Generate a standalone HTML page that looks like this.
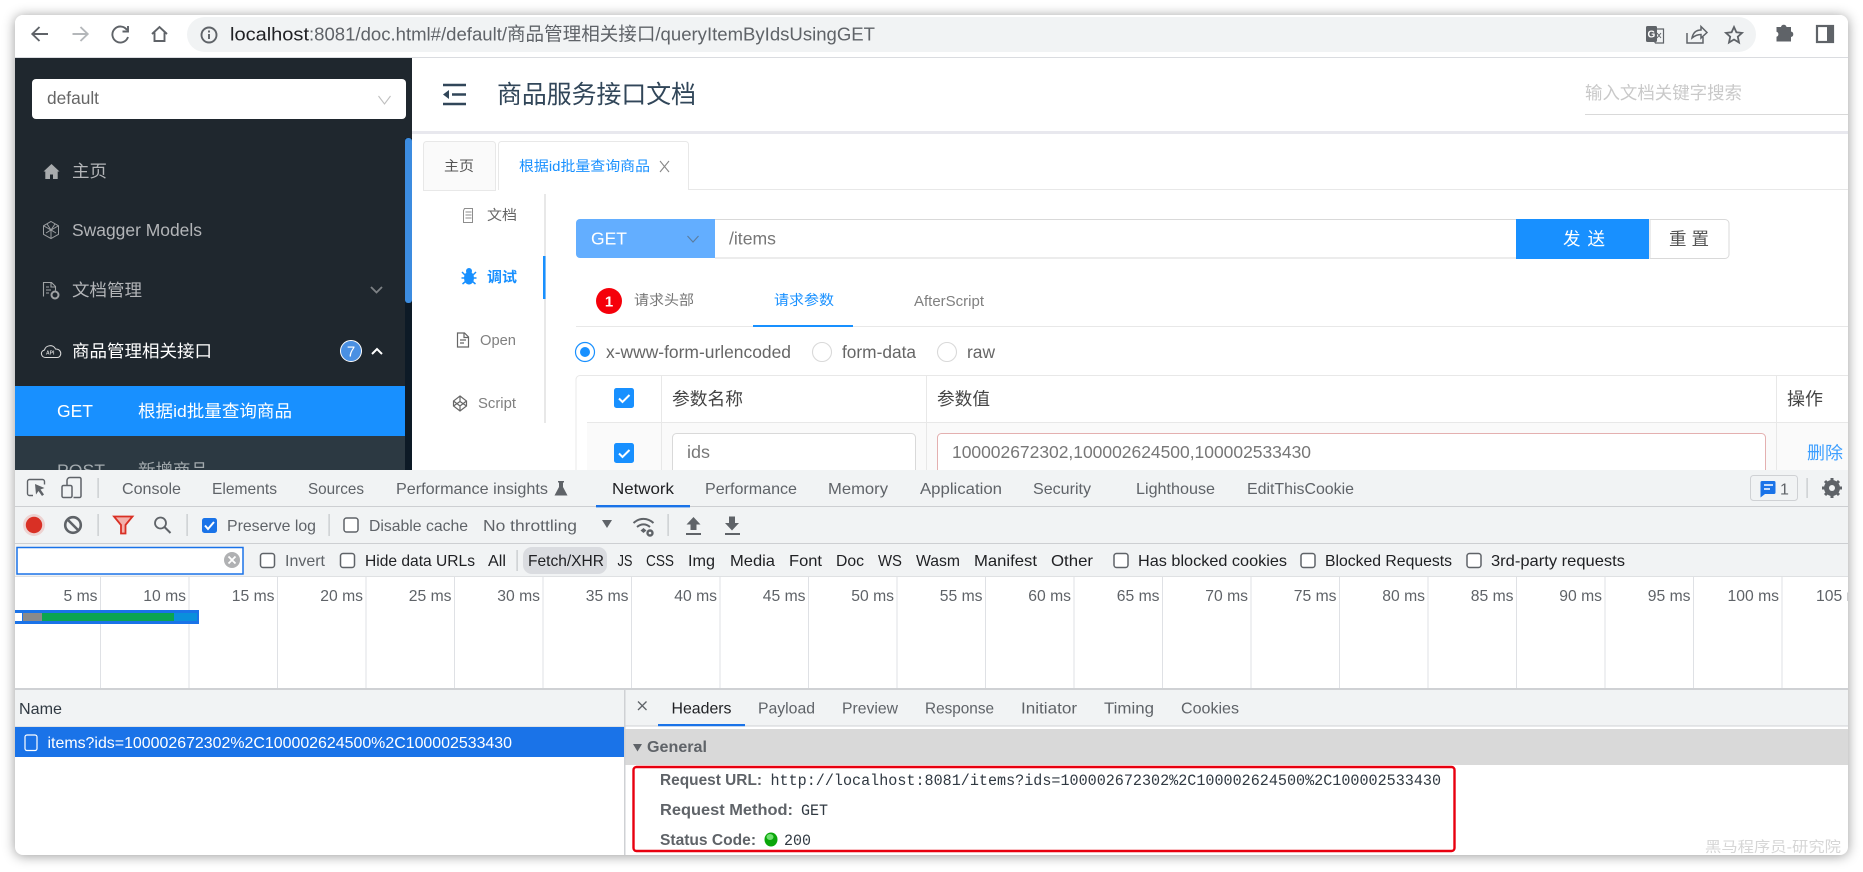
<!DOCTYPE html>
<html lang="zh"><head><meta charset="utf-8"><title>商品服务接口文档</title>
<style>
html,body{margin:0;padding:0;background:#fff;width:1863px;height:872px;overflow:hidden}
svg{display:block}
text{font-family:"Liberation Sans","Noto Sans CJK SC",sans-serif;white-space:pre}
.m{font-family:"Liberation Mono","Noto Sans CJK SC",monospace}
.d{font-size:16px;fill:#5f6368}
.k{font-size:16px;fill:#202124}
.b{font-size:16px;font-weight:700;fill:#5f6368}
.s{font-size:17.2px;fill:#b3b5b8}
.t{font-size:15.7px;fill:#5f6368}
.cb{fill:#fff;stroke:#5f6368;stroke-width:1.5}
.lg{stroke:#dfe1e5;stroke-width:1}
</style></head><body>
<svg xmlns="http://www.w3.org/2000/svg" width="1863" height="872" viewBox="0 0 1863 872">
<defs><clipPath id="w"><rect x="15" y="15" width="1833" height="840" rx="8"/></clipPath></defs>
<rect x="15" y="15" width="1833" height="840" rx="8" fill="#fff" style="filter:drop-shadow(0 1px 6px rgba(0,0,0,.4))"/>
<g clip-path="url(#w)">
<!-- browser toolbar -->
<rect x="15" y="15" width="1833" height="43" fill="#fff"/>
<rect x="15" y="57" width="1833" height="1" fill="#dadce0"/>
<rect x="187" y="17" width="1569" height="35" rx="17.5" fill="#f1f3f4"/>
<g fill="none" stroke="#5f6368" stroke-width="1.9">
<path d="M48 34H32.5M39.5 27l-7.2 7 7.2 7"/>
<path d="M88 34H72.5M80.5 27l7.2 7-7.2 7" stroke="#b4b7ba"/>
<path d="M127 30a8 8 0 1 0 1 7"/><path d="M128 26v5.5h-5.5" />
<path d="M152 34l7.5-7 7.500 7M154.500 32.500v8.500h10v-8.500"/>
<circle cx="209" cy="35" r="7.500"/><path d="M209 34v5M209 30.500v2"/>
</g>
<text x="230" y="40.500" font-size="18.500" fill="#202124" textLength="79" lengthAdjust="spacingAndGlyphs">localhost</text>
<text x="309" y="40.500" font-size="18.500" fill="#5f6368" textLength="566" lengthAdjust="spacingAndGlyphs">:8081/doc.html#/default/商品管理相关接口/queryItemByIdsUsingGET</text>
<!-- right icons -->
<rect x="1646" y="26" width="11" height="16" rx="1.500" fill="#5f6368"/>
<text x="1647.500" y="37.500" font-size="10" font-weight="700" fill="#fff">G</text>
<path d="M1657 29h6.500v14h-8l-1-1.500" fill="none" stroke="#5f6368" stroke-width="1.200"/>
<path d="M1657 33l4 5M1661 33l-4 5" stroke="#5f6368" stroke-width="1"/>
<g fill="none" stroke="#5f6368" stroke-width="1.500">
<path d="M1687 33v10h16v-6"/><path d="M1692 38c1-5 4-8 9-8v-3.500l6 6-6 5.500v-3.500c-3 0-6 1-9 3.500z"/>
<path d="M1734 27l2.400 5.300 5.600.6-4.200 3.800 1.200 5.800-5-3-5 3 1.200-5.800-4.200-3.800 5.600-.6z" stroke-width="1.800"/>
</g>
<path d="M1777 31h4.500a2.800 2.800 0 0 1 5.500 0h4.500v4.500a2.800 2.800 0 0 1 0 5.500v4.500h-14.500v-4.800a2.600 2.600 0 0 0 0-5z" transform="translate(-.5 -4)" fill="#5f6368"/>
<rect x="1817" y="26" width="16" height="16" fill="none" stroke="#5f6368" stroke-width="2.200"/><rect x="1827" y="26" width="6" height="16" fill="#5f6368"/>

<!-- main -->
<rect x="412" y="58" width="1436" height="412" fill="#fff"/>
<!-- header -->
<g fill="none" stroke="#314659" stroke-width="2.400"><path d="M443 85h23M452 94.500h14M443 104h23"/></g>
<path d="M449 90v9l-6-4.500z" fill="#314659"/>
<text x="497" y="103" font-size="25" fill="#314659" textLength="199" lengthAdjust="spacingAndGlyphs">商品服务接口文档</text>
<text x="1585" y="99" font-size="17.500" fill="#c9c9c9" textLength="157" lengthAdjust="spacingAndGlyphs">输入文档关键字搜索</text>
<rect x="1585" y="114" width="263" height="1" fill="#d9d9d9"/>
<rect x="412" y="131" width="1436" height="3" fill="#e8e8ee"/>
<!-- tabs -->
<rect x="689" y="189" width="1159" height="1" fill="#e8e8e8"/>
<path d="M423.500 190.500v-46a3 3 0 0 1 3-3h66a3 3 0 0 1 3 3v46z" fill="#fafafa" stroke="#e8e8e8"/>
<text x="444" y="171" font-size="14.250" fill="#555" textLength="30" lengthAdjust="spacingAndGlyphs">主页</text>
<path d="M498.500 190v-45.500a3 3 0 0 1 3-3h184a3 3 0 0 1 3 3v45.500" fill="#fff" stroke="#e8e8e8"/>
<text x="519" y="171" font-size="14.250" fill="#1890ff" textLength="131" lengthAdjust="spacingAndGlyphs">根据id批量查询商品</text>
<path d="M660 161l9 11M669 161l-9 11" stroke="#888" stroke-width="1.100"/>
<!-- left vtabs -->
<rect x="544" y="194" width="2" height="229" fill="#e8e8e8"/>
<rect x="543" y="256" width="2.500" height="43" fill="#1890ff"/>
<g fill="none" stroke="#8d8d8d" stroke-width="1"><path d="M464.500 208.500h8v14h-9v-12zM465.500 212h6M465.500 215h6M465.500 218h6"/></g>
<text x="487" y="220" font-size="14.250" fill="#666" textLength="30" lengthAdjust="spacingAndGlyphs">文档</text>
<g fill="#1890ff"><ellipse cx="469" cy="278" rx="5" ry="6.500"/><circle cx="469" cy="271" r="3"/><path d="M462 272l3 3M476 272l-3 3M461.500 278h4M472.500 278h4M462.500 284l3-2.500M475.500 284l-3-2.500" stroke="#1890ff" stroke-width="1.500"/></g>
<text x="487" y="282" font-size="14.250" font-weight="700" fill="#1890ff" textLength="30" lengthAdjust="spacingAndGlyphs">调试</text>
<path d="M457.500 333h7l4 4v10h-11zM464 333v4.500h4.500M460 340h6M460 343h4" fill="none" stroke="#666" stroke-width="1.200"/>
<text x="480" y="345" font-size="14.800" fill="#808080" textLength="36" lengthAdjust="spacingAndGlyphs">Open</text>
<path d="M460 396l6.500 5v5l-6.500 5-6.500-5v-5zM460 396v5.500M453.500 401l6.500 5 6.500-5M453.500 406l6.500-4.500 6.500 4.500M460 406v5" fill="none" stroke="#666" stroke-width="1.200"/>
<text x="478" y="408" font-size="14.800" fill="#808080" textLength="38" lengthAdjust="spacingAndGlyphs">Script</text>
<!-- url bar -->
<path d="M715 219.500h801M715 258h801" stroke="#d9d9d9"/>
<path d="M580 219h135v39h-135a4 4 0 0 1-4-4v-31a4 4 0 0 1 4-4z" fill="#63aeff"/>
<text x="591" y="244.500" font-size="17.500" fill="#fff" textLength="36" lengthAdjust="spacingAndGlyphs">GET</text>
<path d="M687.500 236l5.500 6 5.500-6" fill="none" stroke="#5b7c9e" stroke-width="1.100"/>
<text x="729" y="244.500" font-size="17.500" fill="#777" textLength="47" lengthAdjust="spacingAndGlyphs">/items</text>
<rect x="1516" y="219" width="133" height="40" fill="#1890ff"/>
<text x="1563" y="245" font-size="17.500" fill="#fff" textLength="42" lengthAdjust="spacing">发送</text>
<path d="M1650 219.500h75a4 4 0 0 1 4 4v31a4 4 0 0 1-4 4h-75z" fill="#fff" stroke="#d9d9d9"/>
<text x="1669" y="245" font-size="17.500" fill="#555" textLength="40" lengthAdjust="spacing">重置</text>
<!-- sub tabs -->
<rect x="576" y="326" width="1272" height="1" fill="#e8e8e8"/>
<circle cx="609" cy="301" r="13" fill="#f5000a"/>
<text x="609" y="306.500" font-size="15" font-weight="700" fill="#fff" text-anchor="middle">1</text>
<text x="634" y="305" font-size="14.250" fill="#777" textLength="60" lengthAdjust="spacingAndGlyphs">请求头部</text>
<text x="774" y="305" font-size="14.250" fill="#1890ff" textLength="60" lengthAdjust="spacingAndGlyphs">请求参数</text>
<rect x="753" y="325" width="100" height="2" fill="#1890ff"/>
<text x="914" y="306" font-size="14.800" fill="#808080" textLength="70" lengthAdjust="spacingAndGlyphs">AfterScript</text>
<!-- radios -->
<circle cx="585" cy="352" r="9.500" fill="#fff" stroke="#1890ff" stroke-width="1.200"/><circle cx="585" cy="352" r="5" fill="#1890ff"/>
<text x="606" y="358" font-size="17.500" fill="#666" textLength="185" lengthAdjust="spacingAndGlyphs">x-www-form-urlencoded</text>
<circle cx="822" cy="352" r="9.500" fill="#fff" stroke="#d9d9d9" stroke-width="1.100"/>
<text x="842" y="358" font-size="17.500" fill="#666" textLength="74" lengthAdjust="spacingAndGlyphs">form-data</text>
<circle cx="947" cy="352" r="9.500" fill="#fff" stroke="#d9d9d9" stroke-width="1.100"/>
<text x="967" y="358" font-size="17.500" fill="#666" textLength="28" lengthAdjust="spacingAndGlyphs">raw</text>
<!-- table -->
<path d="M1848 375.500H580a4 4 0 0 0-4 4V470" fill="none" stroke="#e8e8e8"/>
<rect x="587" y="422" width="1261" height="48" fill="#fafafa"/>
<rect x="587" y="422" width="1261" height="1" fill="#e8e8e8"/>
<path d="M661.500 376V470M926.500 376V470M1776.500 376V470" stroke="#e8e8e8"/>
<rect x="614" y="388" width="20" height="20" rx="2.500" fill="#1890ff"/><path d="M619 398.500l3.500 3.500 7-7" fill="none" stroke="#fff" stroke-width="2"/>
<rect x="614" y="443" width="20" height="20" rx="2.500" fill="#1890ff"/><path d="M619 453.500l3.500 3.500 7-7" fill="none" stroke="#fff" stroke-width="2"/>
<text x="672" y="405" font-size="17.500" fill="#444" textLength="71" lengthAdjust="spacingAndGlyphs">参数名称</text>
<text x="937" y="405" font-size="17.500" fill="#444" textLength="53" lengthAdjust="spacingAndGlyphs">参数值</text>
<text x="1787" y="405" font-size="17.500" fill="#444" textLength="36" lengthAdjust="spacingAndGlyphs">操作</text>
<rect x="672.500" y="433.500" width="243" height="60" rx="4" fill="#fff" stroke="#d9d9d9"/>
<rect x="937.500" y="433.500" width="828" height="60" rx="4" fill="#fff" stroke="#e4b0b0"/>
<text x="687" y="458" font-size="17.400" fill="#777" textLength="23" lengthAdjust="spacingAndGlyphs">ids</text>
<text x="952" y="458" font-size="17.400" fill="#777" textLength="359" lengthAdjust="spacingAndGlyphs">100002672302,100002624500,100002533430</text>
<text x="1807" y="459" font-size="17.500" fill="#3c9eff" textLength="36" lengthAdjust="spacingAndGlyphs">删除</text>

<!-- sidebar -->
<rect x="15" y="58" width="397" height="412" fill="#1f272e"/>
<rect x="405" y="58" width="7" height="412" fill="#0d1a26"/>
<rect x="15" y="58" width="397" height="80" fill="#1f272e"/>
<rect x="405" y="138" width="7" height="165" rx="3" fill="#3c8ce0"/>
<rect x="32" y="79" width="374" height="40" rx="4" fill="#fff"/>
<text x="47" y="104" font-size="17.500" fill="#666" textLength="52" lengthAdjust="spacingAndGlyphs">default</text>
<path d="M378.500 96l6 8 6-8" fill="none" stroke="#bfbfbf" stroke-width="1.100"/>
<path d="M43.500 171.500l8-7.500 8 7.500h-1.800v7.500h-4.700v-4.500h-3v4.500h-4.700v-7.500z" fill="#a8abad"/>
<text x="72" y="177" class="s" textLength="35" lengthAdjust="spacingAndGlyphs">主页</text>
<path d="M51 221.500l7.500 4.300v8.500l-7.500 4.300-7.500-4.300v-8.500zM44 226l7 4 7-4M51 230v8M47 224l4 6 4-6M46 233l5-3 5 3" fill="none" stroke="#9a9da0" stroke-width="1"/>
<text x="72" y="236" class="s" textLength="130" lengthAdjust="spacingAndGlyphs">Swagger Models</text>
<path d="M43.500 296.500v-14h8l4 4v4M51 283v4h4.500M46 287h3M46 290h5M46 293h3" fill="none" stroke="#a0a3a5" stroke-width="1.100"/>
<circle cx="55" cy="295" r="3.500" fill="none" stroke="#a0a3a5" stroke-width="2"/>
<text x="72" y="296" class="s" textLength="70" lengthAdjust="spacingAndGlyphs">文档管理</text>
<path d="M371 287l5.500 5.500 5.500-5.500" fill="none" stroke="#7d8185" stroke-width="1.800"/>
<path d="M47 357.500c-5 0-6.500-6-1.500-7.500 1-5 9-6 11-1 4 0 6 3 5 6-.5 1.500-2 2.500-3.500 2.500z" transform="translate(-1 0)" fill="none" stroke="#d9d9d9" stroke-width="1.100"/>
<text x="46" y="354.500" font-size="5" font-weight="700" fill="#d9d9d9">API</text>
<text x="72" y="357" font-size="17" fill="#fff" textLength="140" lengthAdjust="spacingAndGlyphs">商品管理相关接口</text>
<circle cx="351" cy="351" r="10.500" fill="#4a90e2" stroke="#fff" stroke-width="1"/>
<text x="351" y="356.500" font-size="15" fill="#fff" text-anchor="middle">7</text>
<path d="M372 354l5-5 5 5" fill="none" stroke="#fff" stroke-width="2"/>
<rect x="15" y="386" width="390" height="50" fill="#1890ff"/>
<text x="57" y="417" font-size="17.500" fill="#fff" textLength="36" lengthAdjust="spacingAndGlyphs">GET</text>
<text x="138" y="417" font-size="17" fill="#fff" textLength="154" lengthAdjust="spacingAndGlyphs">根据id批量查询商品</text>
<rect x="15" y="436" width="390" height="34" fill="#2c3942"/>
<text x="57" y="476" font-size="17" fill="#a3aaae" textLength="48" lengthAdjust="spacingAndGlyphs">POST</text>
<text x="138" y="476" font-size="17" fill="#a3aaae" textLength="70" lengthAdjust="spacingAndGlyphs">新增商品</text>

<!-- devtools -->
<rect x="15" y="470" width="1833" height="107" fill="#f1f3f4"/>
<rect x="15" y="506" width="1833" height="1" fill="#cdcfd2"/>
<rect x="15" y="543" width="1833" height="1" fill="#cdcfd2"/>
<rect x="15" y="576.500" width="1833" height="1" fill="#cdcfd2"/>
<path d="M33 495.500h-3.500a2 2 0 0 1-2-2v-12a2 2 0 0 1 2-2h13a2 2 0 0 1 2 2v3" fill="none" stroke="#5f6368" stroke-width="1.400"/>
<path d="M35 484l9.500 4-4 1.500 3.500 5-2 1.500-3.500-5-2.500 3.500z" fill="#5f6368"/>
<path d="M67 485v-4.500a3 3 0 0 1 3-3h9.500a1.500 1.500 0 0 1 1.500 1.500v17a1.500 1.500 0 0 1-1.500 1.500h-6" fill="none" stroke="#5f6368" stroke-width="1.500"/>
<rect x="62" y="485.500" width="10" height="12" rx="1.500" fill="none" stroke="#5f6368" stroke-width="1.500"/>
<rect x="97.500" y="478" width="1.200" height="20" fill="#c4c7ca"/>
<g class="d">
<text class="d" x="122" y="494" textLength="59" lengthAdjust="spacingAndGlyphs">Console</text>
<text class="d" x="212" y="494" textLength="65" lengthAdjust="spacingAndGlyphs">Elements</text>
<text class="d" x="308" y="494" textLength="56" lengthAdjust="spacingAndGlyphs">Sources</text>
<text class="d" x="396" y="494" textLength="152" lengthAdjust="spacingAndGlyphs">Performance insights</text>
<text class="k" x="612" y="494" textLength="62" lengthAdjust="spacingAndGlyphs">Network</text>
<text class="d" x="705" y="494" textLength="92" lengthAdjust="spacingAndGlyphs">Performance</text>
<text class="d" x="828" y="494" textLength="60" lengthAdjust="spacingAndGlyphs">Memory</text>
<text class="d" x="920" y="494" textLength="82" lengthAdjust="spacingAndGlyphs">Application</text>
<text class="d" x="1033" y="494" textLength="58" lengthAdjust="spacingAndGlyphs">Security</text>
<text class="d" x="1136" y="494" textLength="79" lengthAdjust="spacingAndGlyphs">Lighthouse</text>
<text class="d" x="1247" y="494" textLength="107" lengthAdjust="spacingAndGlyphs">EditThisCookie</text>
</g>
<path d="M558 481h6v1.500h-1v4.500l4.500 8.500h-13l4.500-8.500v-4.500h-1z" fill="#5f6368"/>
<rect x="596" y="505" width="94" height="2.400" fill="#1a73e8"/>
<rect x="1750.500" y="475.500" width="47" height="25" rx="3" fill="#f1f3f4" stroke="#cfd1d4"/>
<path d="M1762 481h12a1.500 1.500 0 0 1 1.500 1.500v10a1.500 1.500 0 0 1-1.500 1.500h-9l-4.500 3.500v-15a1.500 1.500 0 0 1 1.500-1.500z" fill="#1a73e8"/>
<path d="M1764 485h9M1764 489h6" stroke="#fff" stroke-width="1.400"/>
<text x="1780" y="494.500" font-size="16" fill="#5f6368">1</text>
<rect x="1806.500" y="478" width="1.200" height="20" fill="#c4c7ca"/>
<circle cx="1832" cy="488" r="6" fill="none" stroke="#5f6368" stroke-width="4"/>
<path d="M1832 478v20M1822 488h20M1825 481l14 14M1839 481l-14 14" stroke="#5f6368" stroke-width="3"/>
<circle cx="1832" cy="488" r="3" fill="#f1f3f4"/>

<!-- row 2 -->
<circle cx="34" cy="525" r="11" fill="#e8aaa6" opacity=".45"/>
<circle cx="34" cy="525" r="8.200" fill="#d93025"/>
<circle cx="73" cy="525" r="7.800" fill="none" stroke="#5f6368" stroke-width="2.600"/><path d="M67.500 519.500l11 11" stroke="#5f6368" stroke-width="2.600"/>
<rect x="97.500" y="514" width="1.200" height="22" fill="#c4c7ca"/>
<path d="M114 516.500h18.500l-7 8.500v8.500h-4.500v-8.500z" fill="#f3b0ab" stroke="#d93025" stroke-width="1.800"/>
<circle cx="160.500" cy="523" r="5.500" fill="none" stroke="#5f6368" stroke-width="1.800"/><path d="M164.500 527l6 6" stroke="#5f6368" stroke-width="2"/>
<rect x="186.500" y="514" width="1.200" height="22" fill="#c4c7ca"/>
<rect x="202" y="518" width="15" height="15" rx="2.500" fill="#1a73e8"/><path d="M205 525.500l3 3.500 6-7" fill="none" stroke="#fff" stroke-width="2"/>
<text class="d" x="227" y="531" textLength="89" lengthAdjust="spacingAndGlyphs">Preserve log</text>
<rect x="328.500" y="514" width="1.200" height="22" fill="#c4c7ca"/>
<rect x="344" y="518" width="14" height="14" rx="2.500" class="cb"/>
<text class="d" x="369" y="531" textLength="99" lengthAdjust="spacingAndGlyphs">Disable cache</text>
<text class="d" x="483" y="531" textLength="94" lengthAdjust="spacingAndGlyphs">No throttling</text>
<path d="M602 520h10l-5 8z" fill="#5f6368"/>
<path d="M633.500 523c6-5.500 14-5.500 20 0M637 527c4-3.500 9-3.500 13 0" fill="none" stroke="#5f6368" stroke-width="1.900"/><path d="M640.500 530.500l3-2.500 3 2.500-3 2.500z" fill="#5f6368"/>
<circle cx="650" cy="533" r="2.500" fill="none" stroke="#5f6368" stroke-width="2.400"/>
<rect x="667.500" y="514" width="1.200" height="22" fill="#c4c7ca"/>
<path d="M693.500 517l7 7.500h-4v5.500h-6v-5.500h-4zM686 533h15v2h-15z" fill="#5f6368"/>
<path d="M732 530.500l-7-7.500h4v-6.500h6v6.500h4zM725 533h15v2h-15z" fill="#5f6368"/>

<!-- row 3 -->
<rect x="17" y="547.500" width="226" height="26.500" fill="#fff" stroke="#1a73e8" stroke-width="1.500"/>
<circle cx="232" cy="560" r="8" fill="#b0b1b3"/><path d="M228.500 556.500l7 7M235.500 556.500l-7 7" stroke="#fff" stroke-width="1.800"/>
<rect x="260.500" y="553.500" width="14" height="14" rx="2.500" class="cb"/>
<text class="d" x="285" y="566" textLength="40" lengthAdjust="spacingAndGlyphs">Invert</text>
<rect x="340.500" y="553.500" width="14" height="14" rx="2.500" class="cb"/>
<text class="k" x="365" y="566" textLength="110" lengthAdjust="spacingAndGlyphs">Hide data URLs</text>
<text class="k" x="488" y="566" textLength="18" lengthAdjust="spacingAndGlyphs">All</text>
<rect x="516.500" y="550" width="1.200" height="21" fill="#c4c7ca"/>
<rect x="523" y="547" width="84" height="27" rx="9" fill="#dadce0"/>
<text class="k" x="528" y="566" textLength="76" lengthAdjust="spacingAndGlyphs">Fetch/XHR</text>
<text class="k" x="617.500" y="566" textLength="15" lengthAdjust="spacingAndGlyphs">JS</text>
<text class="k" x="646" y="566" textLength="28" lengthAdjust="spacingAndGlyphs">CSS</text>
<text class="k" x="688" y="566" textLength="27" lengthAdjust="spacingAndGlyphs">Img</text>
<text class="k" x="730" y="566" textLength="45" lengthAdjust="spacingAndGlyphs">Media</text>
<text class="k" x="789" y="566" textLength="33" lengthAdjust="spacingAndGlyphs">Font</text>
<text class="k" x="836" y="566" textLength="28" lengthAdjust="spacingAndGlyphs">Doc</text>
<text class="k" x="878" y="566" textLength="24" lengthAdjust="spacingAndGlyphs">WS</text>
<text class="k" x="916" y="566" textLength="44" lengthAdjust="spacingAndGlyphs">Wasm</text>
<text class="k" x="974" y="566" textLength="63" lengthAdjust="spacingAndGlyphs">Manifest</text>
<text class="k" x="1051" y="566" textLength="42" lengthAdjust="spacingAndGlyphs">Other</text>
<rect x="1114" y="553.500" width="14" height="14" rx="2.500" class="cb"/>
<text class="k" x="1138" y="566" textLength="149" lengthAdjust="spacingAndGlyphs">Has blocked cookies</text>
<rect x="1301" y="553.500" width="14" height="14" rx="2.500" class="cb"/>
<text class="k" x="1325" y="566" textLength="127" lengthAdjust="spacingAndGlyphs">Blocked Requests</text>
<rect x="1467" y="553.500" width="14" height="14" rx="2.500" class="cb"/>
<text class="k" x="1491" y="566" textLength="134" lengthAdjust="spacingAndGlyphs">3rd-party requests</text>

<!-- timeline -->
<rect x="15" y="577" width="1833" height="112" fill="#fff"/>
<path class="lg" d="M100.500 577V688M189 577V688M277.500 577V688M366 577V688M454.500 577V688M543 577V688M631.500 577V688M720 577V688M808.500 577V688M897 577V688M985.500 577V688M1074 577V688M1162.500 577V688M1251 577V688M1339.500 577V688M1428 577V688M1516.500 577V688M1605 577V688M1693.500 577V688M1782 577V688" fill="none"/>
<g class="t" text-anchor="end">
<text class="t" x="97.500" y="601" text-anchor="end">5 ms</text>
<text class="t" x="186" y="601" text-anchor="end">10 ms</text>
<text class="t" x="274.500" y="601" text-anchor="end">15 ms</text>
<text class="t" x="363" y="601" text-anchor="end">20 ms</text>
<text class="t" x="451.500" y="601" text-anchor="end">25 ms</text>
<text class="t" x="540" y="601" text-anchor="end">30 ms</text>
<text class="t" x="628.500" y="601" text-anchor="end">35 ms</text>
<text class="t" x="717" y="601" text-anchor="end">40 ms</text>
<text class="t" x="805.500" y="601" text-anchor="end">45 ms</text>
<text class="t" x="894" y="601" text-anchor="end">50 ms</text>
<text class="t" x="982.500" y="601" text-anchor="end">55 ms</text>
<text class="t" x="1071" y="601" text-anchor="end">60 ms</text>
<text class="t" x="1159.500" y="601" text-anchor="end">65 ms</text>
<text class="t" x="1248" y="601" text-anchor="end">70 ms</text>
<text class="t" x="1336.500" y="601" text-anchor="end">75 ms</text>
<text class="t" x="1425" y="601" text-anchor="end">80 ms</text>
<text class="t" x="1513.500" y="601" text-anchor="end">85 ms</text>
<text class="t" x="1602" y="601" text-anchor="end">90 ms</text>
<text class="t" x="1690.500" y="601" text-anchor="end">95 ms</text>
<text class="t" x="1779" y="601" text-anchor="end">100 ms</text>
<text class="t" x="1867.500" y="601" text-anchor="end">105 ms</text>
</g>
<rect x="15" y="610" width="184" height="14" fill="#1a73e8"/>
<rect x="15" y="613" width="7" height="8" fill="#fff"/>
<rect x="23" y="613" width="19" height="8" fill="#8a8a8a"/>
<rect x="42" y="613" width="132" height="8" fill="#0ba551"/>
<rect x="174" y="613" width="23" height="8" fill="#0a8fdc"/>
<rect x="15" y="688" width="1833" height="2" fill="#cfd1d4"/>

<!-- name panel -->
<rect x="15" y="690" width="609" height="37" fill="#f1f3f4"/>
<rect x="15" y="726.500" width="609" height="1" fill="#cfd1d4"/>
<text x="19" y="714" font-size="16" fill="#303942" textLength="43" lengthAdjust="spacingAndGlyphs">Name</text>
<rect x="15" y="727" width="609" height="30" fill="#1a73e8"/>
<rect x="25" y="735" width="12" height="15.500" rx="2" fill="none" stroke="#fff" stroke-width="1.200"/>
<text x="47.500" y="748" font-size="16" fill="#fff" textLength="464.500" lengthAdjust="spacingAndGlyphs">items?ids=100002672302%2C100002624500%2C100002533430</text>
<rect x="624" y="690" width="1.500" height="168" fill="#cfd1d4"/>

<!-- detail -->
<rect x="625.500" y="690" width="1223" height="36" fill="#f1f3f4"/>
<rect x="625.500" y="725.500" width="1223" height="1" fill="#cfd1d4"/>
<path d="M638 701.500l8.500 8.500M646.500 701.500l-8.500 8.500" stroke="#5f6368" stroke-width="1.300"/>
<text class="k" x="671.500" y="713.500" textLength="60" lengthAdjust="spacingAndGlyphs">Headers</text>
<rect x="658" y="724" width="87" height="2.200" fill="#1a73e8"/>
<text class="d" x="758" y="713.500" textLength="57" lengthAdjust="spacingAndGlyphs">Payload</text>
<text class="d" x="842" y="713.500" textLength="56" lengthAdjust="spacingAndGlyphs">Preview</text>
<text class="d" x="925" y="713.500" textLength="69" lengthAdjust="spacingAndGlyphs">Response</text>
<text class="d" x="1021" y="713.500" textLength="56" lengthAdjust="spacingAndGlyphs">Initiator</text>
<text class="d" x="1104" y="713.500" textLength="50" lengthAdjust="spacingAndGlyphs">Timing</text>
<text class="d" x="1181" y="713.500" textLength="58" lengthAdjust="spacingAndGlyphs">Cookies</text>
<rect x="625.500" y="729" width="1223" height="36" fill="#d9d9d9"/>
<path d="M633 744h9l-4.500 7.500z" fill="#5f6368"/>
<text class="b" x="647" y="752" textLength="60" lengthAdjust="spacingAndGlyphs">General</text>
<rect x="633.500" y="767" width="821" height="84" rx="3" fill="#fff" stroke="#e8000f" stroke-width="2.400"/>
<text class="b" x="660" y="785" textLength="102" lengthAdjust="spacingAndGlyphs">Request URL:</text>
<text class="m" x="770.500" y="785" font-size="15.500" fill="#303942" textLength="670.500" lengthAdjust="spacingAndGlyphs">http://localhost:8081/items?ids=100002672302%2C100002624500%2C100002533430</text>
<text class="b" x="660" y="815" textLength="133" lengthAdjust="spacingAndGlyphs">Request Method:</text>
<text class="m" x="801" y="815" font-size="15.500" fill="#303942" textLength="27" lengthAdjust="spacingAndGlyphs">GET</text>
<text class="b" x="660" y="845" textLength="96" lengthAdjust="spacingAndGlyphs">Status Code:</text>
<ellipse cx="771" cy="839.500" rx="6.500" ry="7" fill="#0aa60a"/><ellipse cx="770" cy="837" rx="3.500" ry="3" fill="#6fe06f"/>
<text class="m" x="784" y="845" font-size="15.500" fill="#303942" textLength="27" lengthAdjust="spacingAndGlyphs">200</text>
<text x="1705" y="852" font-size="14.500" fill="#d6d6d6" textLength="136" lengthAdjust="spacingAndGlyphs">黑马程序员-研究院</text>
</g>
</svg>
</body></html>
